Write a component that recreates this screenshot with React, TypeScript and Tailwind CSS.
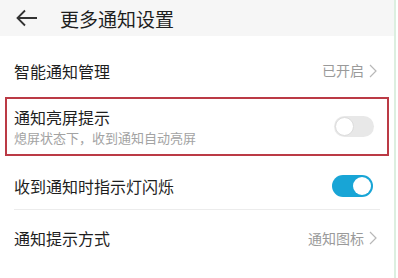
const font = { fontFamily: '"Noto Sans CJK SC", "Noto Sans", sans-serif' };

function Chevron() {
  return (
    <svg width="8" height="14" viewBox="0 0 8 14" className="ml-[5px]">
      <polyline points="1,1 7,7 1,13" fill="none" stroke="#b8b8b8" strokeWidth="1.2" />
    </svg>
  );
}

function Toggle({ on }: { on: boolean }) {
  return on ? (
    <div className="flex h-[22px] w-[41px] items-center justify-end rounded-full bg-[#18a5d6] px-[2px]">
      <div className="h-[18px] w-[18px] rounded-full bg-white" />
    </div>
  ) : (
    <div className="flex h-[21px] w-[40px] items-center rounded-full bg-[#e8e8e8] px-[1px]">
      <div className="h-[19px] w-[19px] rounded-full border border-[#dcdcdc] bg-white" />
    </div>
  );
}

export default function App() {
  return (
    <div className="flex h-[278px] w-[398px] overflow-hidden bg-white" style={font}>
      <div className="flex w-[394px] flex-col">
        <div className="flex h-[36px] items-center bg-[#f6f6f6]">
          <svg width="22" height="18" viewBox="0 0 22 18" className="ml-[16px]">
            <path d="M21 9H2M9 1.5L1.5 9 9 16.5" fill="none" stroke="#333" strokeWidth="1.8" />
          </svg>
          <span className="ml-[22px] text-[19px] leading-none text-[#1e1e1e]">更多通知设置</span>
        </div>

        <div className="flex h-[61px] items-center px-[14px] pt-[8px]">
          <span className="flex-1 text-[16px] text-[#1e1e1e]">智能通知管理</span>
          <span className="text-[14px] text-[#9a9a9a]">已开启</span>
          <Chevron />
          <div className="w-[3px]" />
        </div>

        <div className="mx-[5px] flex h-[59px] items-center border-2 border-[#bb3a45] pl-[7px] pr-[13px]">
          <div className="flex flex-1 flex-col">
            <span className="text-[16px] leading-[22px] text-[#1e1e1e]">通知亮屏提示</span>
            <span className="text-[13px] leading-[20px] text-[#a3a3a3]">熄屏状态下，收到通知自动亮屏</span>
          </div>
          <Toggle on={false} />
        </div>

        <div className="flex h-[53px] items-center pl-[14px] pr-[21px] pt-[6px]">
          <span className="flex-1 text-[16px] text-[#1e1e1e]">收到通知时指示灯闪烁</span>
          <Toggle on />
        </div>
        <div className="mx-[14px] h-px bg-[#ececec]" />

        <div className="flex h-[56px] items-center px-[14px]">
          <span className="flex-1 text-[16px] text-[#1e1e1e]">通知提示方式</span>
          <span className="text-[14px] text-[#9a9a9a]">通知图标</span>
          <Chevron />
          <div className="w-[3px]" />
        </div>
      </div>
      <div className="w-[2px] bg-[#dcefe0]" />
    </div>
  );
}
